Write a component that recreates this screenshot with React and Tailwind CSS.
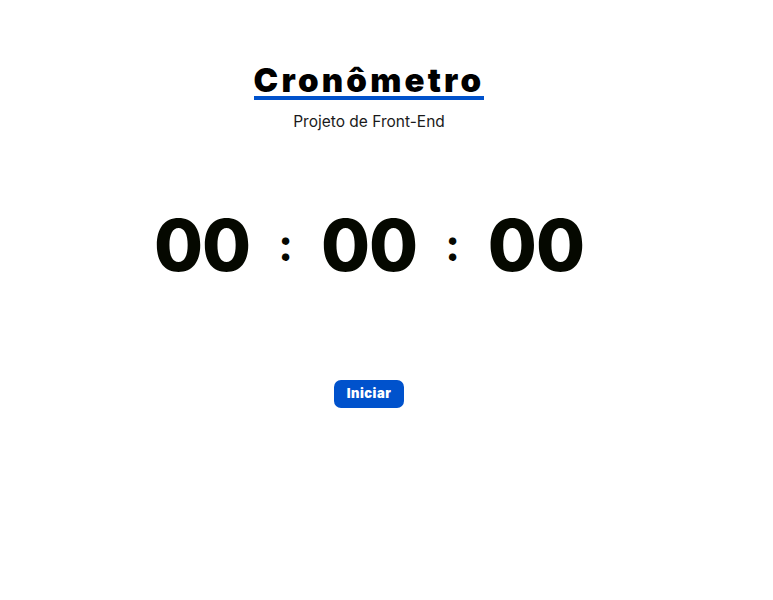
export default function App() {
  return (
    <div className="w-[738px] flex flex-col items-center bg-white min-h-[600px]">
      <h1 className="mt-[64px] text-[33px] leading-[32px] font-black tracking-[3.2px] text-black border-b-4 border-[#0052cc] font-['Inter',sans-serif]">
        Cronômetro
      </h1>
      <p className="mt-[12px] text-[15.5px] leading-[20px] text-[#1a1a1a] font-['Inter',sans-serif]">
        Projeto de Front-End
      </p>
      <div className="mt-[68px] flex items-center font-['Inter',sans-serif] font-extrabold text-[#050800]">
        <span className="text-[71px] leading-[90px] tracking-[-1px]">00</span>
        <span className="text-[44px] leading-[90px] mx-[28px] font-bold">:</span>
        <span className="text-[71px] leading-[90px] tracking-[-1px]">00</span>
        <span className="text-[44px] leading-[90px] mx-[28px] font-bold">:</span>
        <span className="text-[71px] leading-[90px] tracking-[-1px]">00</span>
      </div>
      <button className="mt-[90px] h-[28px] w-[70px] rounded-[7px] bg-[#0052cc] text-white text-[13px] tracking-[0.5px] font-black font-['Inter',sans-serif]">
        Iniciar
      </button>
    </div>
  );
}
